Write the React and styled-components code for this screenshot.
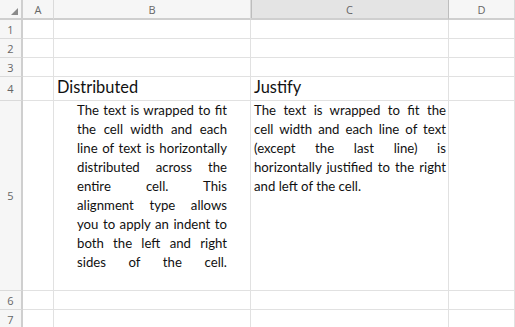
import React from "react";
import styled, { createGlobalStyle } from "styled-components";

const Global = createGlobalStyle`
  html, body { margin: 0; padding: 0; background: #fff; }
  body { width: 515px; height: 327px; overflow: hidden; }
`;

const Sheet = styled.div`
  display: grid;
  grid-template-columns: 23px 31px 197px 198px 66px;
  grid-template-rows: 20px 19px 19px 19px 24px 190px 19px 19px;
  width: 515px;
  overflow: hidden;
  font-family: Lato, "Open Sans", sans-serif;
`;

const ColHead = styled.div`
  box-sizing: border-box;
  background: ${(p) => (p.$active ? "#e4e4e4" : "#f6f6f6")};
  border-right: 1px solid ${(p) => (p.$active ? "#bdbdbd" : "#dadada")};
  border-bottom: 2px solid #cfcfcf;
  ${(p) => p.$active && "box-shadow: inset 1px 0 0 #bdbdbd;"}
  display: flex;
  align-items: center;
  justify-content: center;
  font-family: "Open Sans", "Noto Sans", sans-serif;
  font-size: 11px;
  color: #666;
  padding-top: 1px;
`;

const Corner = styled(ColHead)`
  position: relative;
  border-right: 2px solid #cfcfcf;
`;

const Triangle = styled.div`
  position: absolute;
  right: 3px;
  bottom: 3px;
  width: 0;
  height: 0;
  border-left: 7px solid transparent;
  border-bottom: 7px solid #8a8a8a;
`;

const RowHead = styled.div`
  box-sizing: border-box;
  background: #f6f6f6;
  border-right: 2px solid #cfcfcf;
  border-bottom: 1px solid #dadada;
  display: flex;
  align-items: center;
  justify-content: center;
  font-family: "Open Sans", "Noto Sans", sans-serif;
  font-size: 11px;
  color: #666;
`;

const Cell = styled.div`
  box-sizing: border-box;
  border-right: 1px solid #e1e1e1;
  border-bottom: 1px solid #e1e1e1;
  overflow: hidden;
  color: #111;
`;

const TitleCell = styled(Cell)`
  display: flex;
  align-items: flex-end;
  padding: 0 0 2px 3px;
  font-size: 16.4px;
  line-height: 22px;
`;

const TextCell = styled(Cell)`
  padding: 0 ${(p) => p.$indent}px 0 ${(p) => p.$indentL}px;
  font-size: 13.2px;
  line-height: 19px;
`;

const Line = styled.div`
  text-align: justify;
  text-align-last: ${(p) => (p.$last ? "left" : "justify")};
  height: 19px;
`;

const distributed = [
  "The text is wrapped to fit",
  "the cell width and each",
  "line of text is horizontally",
  "distributed across the",
  "entire cell. This",
  "alignment type allows",
  "you to apply an indent to",
  "both the left and right",
  "sides of the cell.",
];

const justify = [
  "The text is wrapped to fit the",
  "cell width and each line of text",
  "(except the last line) is",
  "horizontally justified to the right",
  "and left of the cell.",
];

const cols = ["A", "B", "C", "D"];

export default function App() {
  const rows = [1, 2, 3, 4, 5, 6, 7];
  return (
    <>
      <Global />
      <Sheet>
        <Corner>
          <Triangle />
        </Corner>
        {cols.map((c) => (
          <ColHead key={c} $active={c === "C"}>
            {c}
          </ColHead>
        ))}
        {rows.map((r) => (
          <React.Fragment key={r}>
            <RowHead>{r}</RowHead>
            {r === 4 ? (
              <>
                <Cell />
                <TitleCell>Distributed</TitleCell>
                <TitleCell>Justify</TitleCell>
                <Cell />
              </>
            ) : r === 5 ? (
              <>
                <Cell />
                <TextCell $indentL={23} $indent={23}>
                  {distributed.map((l, i) => (
                    <Line key={i}>{l}</Line>
                  ))}
                </TextCell>
                <TextCell $indentL={3} $indent={2}>
                  {justify.map((l, i) => (
                    <Line key={i} $last={i === justify.length - 1}>
                      {l}
                    </Line>
                  ))}
                </TextCell>
                <Cell />
              </>
            ) : (
              <>
                <Cell />
                <Cell />
                <Cell />
                <Cell />
              </>
            )}
          </React.Fragment>
        ))}
      </Sheet>
    </>
  );
}
